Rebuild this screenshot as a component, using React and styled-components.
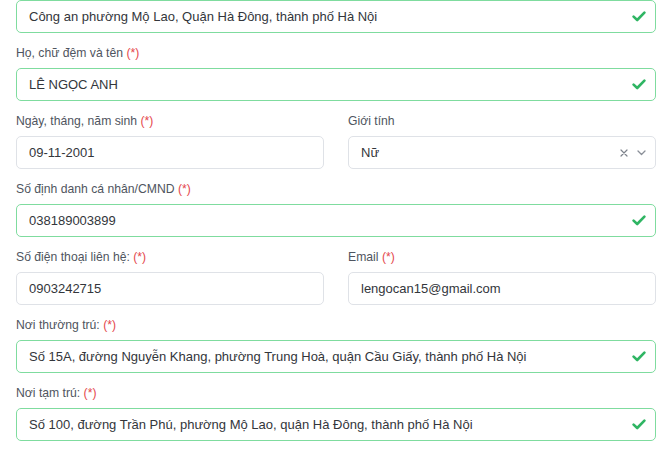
import React from "react";
import styled, { createGlobalStyle } from "styled-components";

const Global = createGlobalStyle`
  html, body { margin: 0; padding: 0; background: #fff; }
  body { font-family: "Liberation Sans", Arial, sans-serif; }
`;

const Form = styled.div`
  width: 640px;
  padding: 0 15px 0 16px;
  display: flex;
  flex-direction: column;
  gap: 12px;
`;

const Row = styled.div`
  display: grid;
  grid-template-columns: ${(p) => (p.$cols === 2 ? "1fr 1fr" : "1fr")};
  column-gap: 24px;
`;

const Field = styled.div`
  display: flex;
  flex-direction: column;
  gap: 7px;
`;

const Label = styled.div`
  font-size: 12.2px;
  line-height: 16px;
  color: #4f5560;
`;

const Req = styled.span`
  color: #e5484d;
`;

const Box = styled.div`
  box-sizing: border-box;
  height: 33px;
  border: 1px solid ${(p) => (p.$valid ? "#7fdc9f" : "#dfe2e7")};
  border-radius: 5px;
  display: flex;
  align-items: center;
  padding: 0 9px 0 12px;
  font-size: 13px;
  color: #33363b;
  background: #fff;
`;

const Value = styled.span`
  flex: 1;
  white-space: nowrap;
  overflow: hidden;
`;

const Icons = styled.span`
  display: flex;
  align-items: center;
  gap: 9px;
  color: #8a8f98;
`;

const Check = () => (
  <svg width="14" height="11" viewBox="0 0 14 11">
    <path d="M1.6 5.6 L5.2 9 L12.4 1.6" fill="none" stroke="#2fb563" strokeWidth="2.6" strokeLinecap="round" strokeLinejoin="round" />
  </svg>
);

const Cross = () => (
  <svg width="8" height="8" viewBox="0 0 8 8">
    <path d="M1 1 L7 7 M7 1 L1 7" stroke="#7d828b" strokeWidth="1.2" strokeLinecap="round" />
  </svg>
);

const Chevron = () => (
  <svg width="9" height="6" viewBox="0 0 9 6">
    <path d="M1 1 L4.5 4.5 L8 1" fill="none" stroke="#8a8f98" strokeWidth="1.3" strokeLinecap="round" strokeLinejoin="round" />
  </svg>
);

const Input = ({ value, valid }) => (
  <Box $valid={valid}>
    <Value>{value}</Value>
    {valid && <Check />}
  </Box>
);

const F = ({ label, req, children }) => (
  <Field>
    <Label>
      {label} {req && <Req>(*)</Req>}
    </Label>
    {children}
  </Field>
);

export default function App() {
  return (
    <>
      <Global />
      <Form>
        <Input valid value="Công an phường Mộ Lao, Quận Hà Đông, thành phố Hà Nội" />
        <F label="Họ, chữ đệm và tên" req>
          <Input valid value="LÊ NGỌC ANH" />
        </F>
        <Row $cols={2}>
          <F label="Ngày, tháng, năm sinh" req>
            <Input value="09-11-2001" />
          </F>
          <F label="Giới tính">
            <Box>
              <Value>Nữ</Value>
              <Icons>
                <Cross />
                <Chevron />
              </Icons>
            </Box>
          </F>
        </Row>
        <F label="Số định danh cá nhân/CMND" req>
          <Input valid value="038189003899" />
        </F>
        <Row $cols={2}>
          <F label="Số điện thoại liên hệ:" req>
            <Input value="0903242715" />
          </F>
          <F label="Email" req>
            <Input value="lengocan15@gmail.com" />
          </F>
        </Row>
        <F label="Nơi thường trú:" req>
          <Input valid value="Số 15A, đường Nguyễn Khang, phường Trung Hoà, quận Cầu Giấy, thành phố Hà Nội" />
        </F>
        <F label="Nơi tạm trú:" req>
          <Input valid value="Số 100, đường Trần Phú, phường Mộ Lao, quận Hà Đông, thành phố Hà Nội" />
        </F>
      </Form>
    </>
  );
}
